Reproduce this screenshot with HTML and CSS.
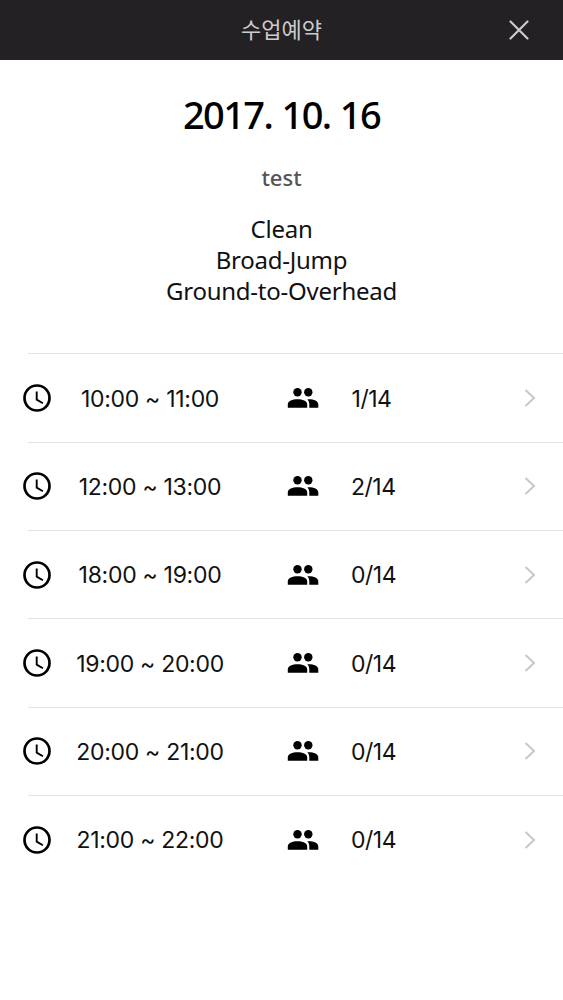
FILE: index.html
```
<!DOCTYPE html>
<html lang="ko">
<head>
  <meta charset="UTF-8">
  <meta name="viewport" content="width=device-width, initial-scale=1.0">
  <title>수업예약</title>
  <link rel="stylesheet" href="styles.css">
</head>
<body>

  <svg class="symbols" xmlns="http://www.w3.org/2000/svg">
    <symbol id="clock" viewBox="0 0 28 28">
      <circle cx="14" cy="14" r="12.500" fill="none" stroke="currentColor" stroke-width="2.700"/>
      <path d="M13.700 7.500v8.100l6.200 3.600" fill="none" stroke="currentColor" stroke-width="1.900"/>
    </symbol>
    <symbol id="people" viewBox="0 0 32 22">
      <circle cx="10.500" cy="5.200" r="4.200"/>
      <circle cx="21.300" cy="5.200" r="4.200"/>
      <path d="M.8 20.700v-3.200C.8 13.700 5.500 12.200 10.500 12.200s9.700 1.500 9.700 5.300v3.200z"/>
      <path d="M20.300 12.200c6-.3 11 1.400 11 5.300v3.200h-9v-3.200c0-2.300-.8-4.100-2-5.300z"/>
    </symbol>
    <symbol id="arrow" viewBox="0 0 12 20">
      <path d="M1.500 2l8.500 8-8.500 8" fill="none" stroke="currentColor" stroke-width="2"/>
    </symbol>
  </svg>

  <header class="navbar">
    <h1 class="navbar-title">수업예약</h1>
    <button class="close-button" aria-label="닫기">
      <svg viewBox="0 0 20 20"><path d="M1.500 1.500l17 17M18.500 1.500l-17 17"/></svg>
    </button>
  </header>

  <section class="workout">
    <h2 class="date">2017. 10. 16</h2>
    <div class="name">test</div>
    <div class="moves">
      <div>Clean</div>
      <div>Broad-Jump</div>
      <div>Ground-to-Overhead</div>
    </div>
  </section>

  <ul class="class-list">
    <li class="class-item">
      <svg class="clock"><use href="#clock"/></svg>
      <span class="time">10:00 <span class="tilde">~</span> 11:00</span>
      <svg class="people"><use href="#people"/></svg>
      <span class="count">1/14</span>
      <svg class="arrow"><use href="#arrow"/></svg>
    </li>
    <li class="class-item">
      <svg class="clock"><use href="#clock"/></svg>
      <span class="time">12:00 <span class="tilde">~</span> 13:00</span>
      <svg class="people"><use href="#people"/></svg>
      <span class="count">2/14</span>
      <svg class="arrow"><use href="#arrow"/></svg>
    </li>
    <li class="class-item">
      <svg class="clock"><use href="#clock"/></svg>
      <span class="time">18:00 <span class="tilde">~</span> 19:00</span>
      <svg class="people"><use href="#people"/></svg>
      <span class="count">0/14</span>
      <svg class="arrow"><use href="#arrow"/></svg>
    </li>
    <li class="class-item">
      <svg class="clock"><use href="#clock"/></svg>
      <span class="time">19:00 <span class="tilde">~</span> 20:00</span>
      <svg class="people"><use href="#people"/></svg>
      <span class="count">0/14</span>
      <svg class="arrow"><use href="#arrow"/></svg>
    </li>
    <li class="class-item">
      <svg class="clock"><use href="#clock"/></svg>
      <span class="time">20:00 <span class="tilde">~</span> 21:00</span>
      <svg class="people"><use href="#people"/></svg>
      <span class="count">0/14</span>
      <svg class="arrow"><use href="#arrow"/></svg>
    </li>
    <li class="class-item">
      <svg class="clock"><use href="#clock"/></svg>
      <span class="time">21:00 <span class="tilde">~</span> 22:00</span>
      <svg class="people"><use href="#people"/></svg>
      <span class="count">0/14</span>
      <svg class="arrow"><use href="#arrow"/></svg>
    </li>
  </ul>

</body>
</html>
```
FILE: styles.css
```
* {
  box-sizing: border-box;
}

body {
  margin: 0;
  min-height: 100vh;
  font-family: "Noto Sans", "Noto Sans CJK KR", sans-serif;
  background-color: #fff;
  color: #111;
}

.symbols {
  display: none;
}

.navbar {
  display: grid;
  grid-template-columns: 88px 1fr 88px;
  align-items: center;
  height: 60px;
  background-color: #232124;
  color: #ccc;
}

.navbar-title {
  grid-column: 2;
  margin: 0;
  font-size: 22px;
  font-weight: 400;
  line-height: 58px;
  height: 60px;
  text-align: center;
}

.close-button {
  justify-self: center;
  display: flex;
  padding: 0;
  border: none;
  background: none;
  cursor: pointer;
}

.close-button svg {
  width: 20px;
  height: 20px;
  stroke: #ccc;
  stroke-width: 2.2;
  stroke-linecap: round;
}

.workout {
  height: 293.4px;
  padding-top: 29px;
  text-align: center;
}

.date {
  margin: 0;
  font-size: 38px;
  font-weight: 500;
  line-height: 50px;
  letter-spacing: -1.6px;
  word-spacing: 1px;
  color: #000;
}

.name {
  margin-top: 23px;
  font-size: 22px;
  font-weight: 500;
  line-height: 30px;
  color: #555;
}

.moves {
  margin-top: 21px;
  font-size: 24px;
  line-height: 31px;
  letter-spacing: -0.25px;
}

.class-list {
  margin: 0 0 0 28px;
  padding: 0;
  list-style: none;
}

.class-item {
  display: grid;
  grid-template-columns: 18px 208px 98px 40px 1fr;
  align-items: center;
  height: 88.35px;
  border-top: 1px solid #e2e2e2;
  font-family: Inter, sans-serif;
  font-size: 23px;
  letter-spacing: -0.3px;
}

.clock {
  width: 28px;
  height: 28px;
  margin-left: -5px;
  color: #000;
}

.time,
.count {
  padding-top: 1px;
  white-space: nowrap;
  text-align: center;
}

.tilde {
  font-feature-settings: "calt" 0;
}

.count {
  margin-left: -1px;
  letter-spacing: -0.5px;
}

.people {
  width: 32px;
  height: 22px;
  justify-self: center;
}

.arrow {
  width: 12px;
  height: 20px;
  margin-right: 27px;
  justify-self: end;
  color: #c7c7cc;
}
```
